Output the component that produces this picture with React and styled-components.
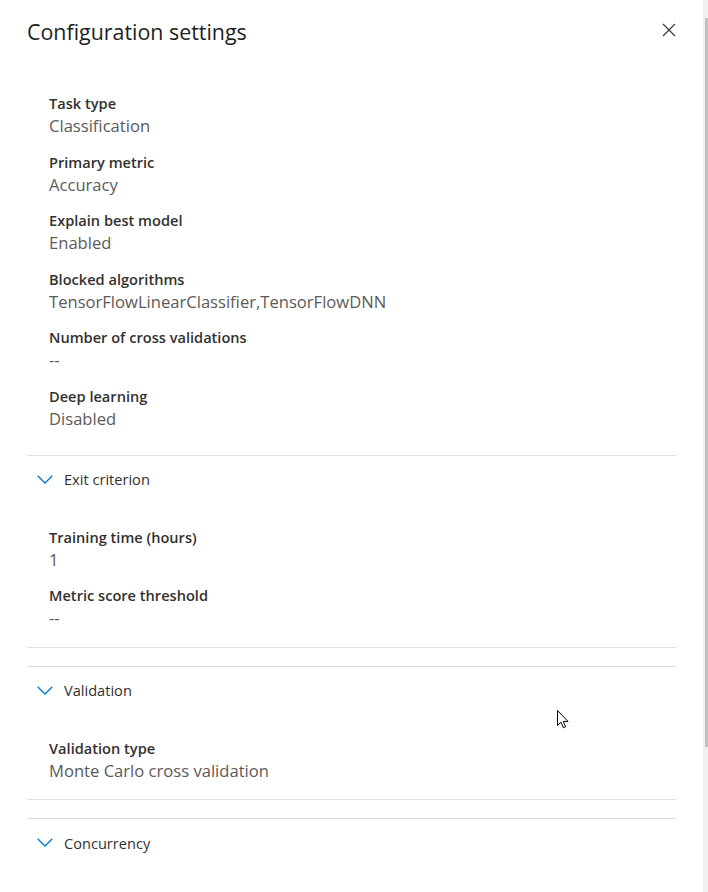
import React from "react";
import styled, { createGlobalStyle } from "styled-components";

const Global = createGlobalStyle`
  html, body { margin: 0; padding: 0; background: #fff; }
  body { font-family: "Open Sans", "Noto Sans", sans-serif; }
  * { box-sizing: border-box; }
`;

const Frame = styled.div`
  display: flex;
  width: 708px;
  height: 892px;
  overflow: hidden;
  position: relative;
`;

const Panel = styled.div`
  width: 703px;
  padding: 0 27px;
  display: flex;
  flex-direction: column;
`;

const ScrollTrack = styled.div`
  width: 5px;
  background: #f0f0f0;
  display: flex;
  justify-content: flex-end;
  padding-top: 18px;
`;

const ScrollThumb = styled.div`
  width: 3px;
  height: 729px;
  background: #c1c1c1;
`;

const Header = styled.div`
  display: flex;
  align-items: center;
  justify-content: space-between;
  height: 62px;
  padding-top: 1px;
`;

const Title = styled.h1`
  margin: 0;
  font-size: 21.4px;
  font-weight: 400;
  color: #201f1e;
  line-height: 28px;
`;

const CloseButton = styled.button`
  border: 0;
  background: none;
  padding: 0;
  width: 14px;
  height: 14px;
  display: flex;
  margin-top: -3px;
  cursor: pointer;
`;

const Body = styled.div`
  padding: 31px 0 27px 22px;
  display: flex;
  flex-direction: column;
  gap: 16.5px;
`;

const Field = styled.div`
  display: flex;
  flex-direction: column;
`;

const Label = styled.div`
  font-size: 14.6px;
  font-weight: 600;
  line-height: 20px;
  color: #323130;
`;

const Value = styled.div`
  font-size: 16.6px;
  line-height: 22px;
  color: #5c5a58;
  padding-top: 2px;
  margin-bottom: -2px;
`;

const Section = styled.section`
  border-top: 1px solid #e1dfdd;
  border-bottom: ${(p) => (p.$last ? "0" : "1px solid #e1dfdd")};
  & + & { margin-top: 18px; }
`;

const SectionHeader = styled.div`
  height: 47px;
  display: flex;
  align-items: center;
  padding-left: 10px;
  gap: 11px;
  font-size: 14.6px;
  color: #323130;
`;

const SectionBody = styled.div`
  padding: 24px 0 19.5px 22px;
  display: flex;
  flex-direction: column;
  gap: 16.5px;
`;

const Cursor = styled.svg`
  position: absolute;
  left: 557px;
  top: 710px;
`;

const Chevron = () => (
  <svg width="16" height="9" viewBox="0 0 16 9">
    <path d="M0.7 0.7 L8 8 L15.3 0.7" fill="none" stroke="#0078d4" strokeWidth="1.3" />
  </svg>
);

const fields = [
  ["Task type", "Classification"],
  ["Primary metric", "Accuracy"],
  ["Explain best model", "Enabled"],
  ["Blocked algorithms", "TensorFlowLinearClassifier,TensorFlowDNN"],
  ["Number of cross validations", "--"],
  ["Deep learning", "Disabled"],
];

const sections = [
  { title: "Exit criterion", fields: [["Training time (hours)", "1"], ["Metric score threshold", "--"]] },
  { title: "Validation", fields: [["Validation type", "Monte Carlo cross validation"]] },
  { title: "Concurrency", fields: [] },
];

export default function App() {
  return (
    <Frame>
      <Global />
      <Panel>
        <Header>
          <Title>Configuration settings</Title>
          <CloseButton aria-label="Close">
            <svg width="14" height="14" viewBox="0 0 14 14">
              <path d="M1 1 L13 13 M13 1 L1 13" stroke="#3b3a39" strokeWidth="1.2" fill="none" />
            </svg>
          </CloseButton>
        </Header>
        <Body>
          {fields.map(([l, v]) => (
            <Field key={l}>
              <Label>{l}</Label>
              <Value>{v}</Value>
            </Field>
          ))}
        </Body>
        {sections.map((s, i) => (
          <Section key={s.title} $last={i === sections.length - 1}>
            <SectionHeader>
              <Chevron />
              {s.title}
            </SectionHeader>
            {s.fields.length > 0 && (
              <SectionBody>
                {s.fields.map(([l, v]) => (
                  <Field key={l}>
                    <Label>{l}</Label>
                    <Value>{v}</Value>
                  </Field>
                ))}
              </SectionBody>
            )}
          </Section>
        ))}
      </Panel>
      <ScrollTrack>
        <ScrollThumb />
      </ScrollTrack>
      <Cursor width="12" height="19" viewBox="0 0 12 19">
        <path d="M0.5 0.5 L0.5 15.5 L4 12.2 L6.4 17.8 L8.6 16.8 L6.3 11.4 L11 11.4 Z" fill="#fff" stroke="#000" strokeWidth="1" />
      </Cursor>
    </Frame>
  );
}
